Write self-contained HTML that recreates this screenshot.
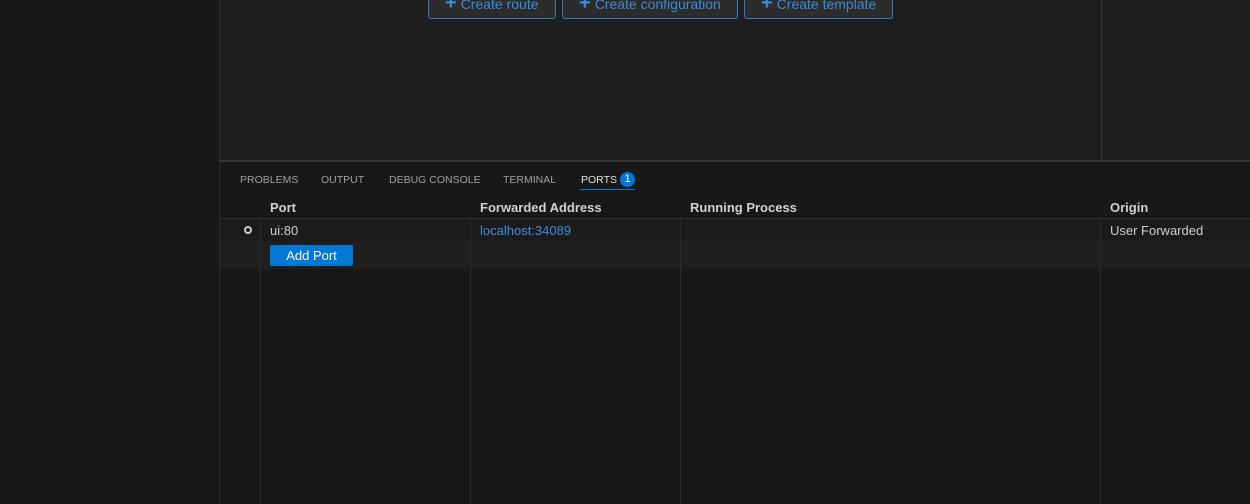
<!DOCTYPE html>
<html><head><style>
*{box-sizing:border-box;margin:0;padding:0}
body{width:1250px;height:504px;overflow:hidden;background:#181818;font-family:"Liberation Sans",sans-serif;position:relative}
.abs{position:absolute}
.btn{position:absolute;top:-12px;height:31px;border:1px solid #2d7fc6;border-radius:3px;background:#2c2c2c;color:#3a8ad6;font-size:14px;line-height:29px;padding-left:16px}
.btn b{font-weight:bold;font-size:20px;margin-right:4px}
.tab{position:absolute;top:174px;font-size:10.5px;color:#a0a0a0}
.th{position:absolute;top:200px;font-size:13px;font-weight:bold;color:#d0d0d0}
.td{position:absolute;top:223px;font-size:13px;color:#cccccc}
.vl{position:absolute;top:219px;width:1px;height:285px;background:#2b2b2b}
</style></head><body>
<div class="abs" style="left:219px;top:0;width:1px;height:504px;background:#2b2b2b"></div>
<div class="abs" style="left:220px;top:0;width:881px;height:160px;background:#1f1f1f"></div>
<div class="abs" style="left:1101px;top:0;width:1px;height:160px;background:#3a3a3a"></div>
<div class="abs" style="left:1102px;top:0;width:148px;height:160px;background:#1f1f1f"></div>
<div class="btn" style="left:428px;width:128px"><b>+</b>Create route</div>
<div class="btn" style="left:562px;width:176px"><b>+</b>Create configuration</div>
<div class="btn" style="left:744px;width:149px"><b>+</b>Create template</div>
<div class="abs" style="left:220px;top:160px;width:1030px;height:2px;background:#363636"></div>
<div class="tab" style="left:240px">PROBLEMS</div>
<div class="tab" style="left:321px">OUTPUT</div>
<div class="tab" style="left:389px">DEBUG CONSOLE</div>
<div class="tab" style="left:503px">TERMINAL</div>
<div class="tab" style="left:581px;color:#e0e0e0">PORTS</div>
<div class="abs" style="left:620px;top:172px;width:15px;height:15px;border-radius:8px;background:#0078d4;color:#fff;font-size:11px;text-align:center;line-height:15px">1</div>
<div class="abs" style="left:580px;top:189px;width:55px;height:1px;background:#0078d4"></div>
<div class="th" style="left:270px">Port</div>
<div class="th" style="left:480px">Forwarded Address</div>
<div class="th" style="left:690px">Running Process</div>
<div class="th" style="left:1110px">Origin</div>
<div class="abs" style="left:220px;top:218px;width:1030px;height:1px;background:#2e2e2e"></div>
<div class="abs" style="left:220px;top:219px;width:1030px;height:22px;background:#1b1b1b"></div>
<div class="abs" style="left:220px;top:241px;width:1030px;height:28px;background:#1f1f1f"></div>
<div class="vl" style="left:260px"></div><div class="vl" style="left:470px"></div><div class="vl" style="left:680px"></div><div class="vl" style="left:1100px"></div>
<div class="abs" style="left:244px;top:226px;width:8px;height:8px;border:2px solid #ccc;border-radius:50%"></div>
<div class="td" style="left:270px">ui:80</div>
<div class="td" style="left:480px;color:#3c8fdb">localhost:34089</div>
<div class="td" style="left:1110px">User Forwarded</div>
<div class="abs" style="left:270px;top:245px;width:83px;height:21px;background:#0078d4;border-radius:2px;color:#fff;font-size:13px;text-align:center;line-height:21px">Add Port</div>
</body></html>
